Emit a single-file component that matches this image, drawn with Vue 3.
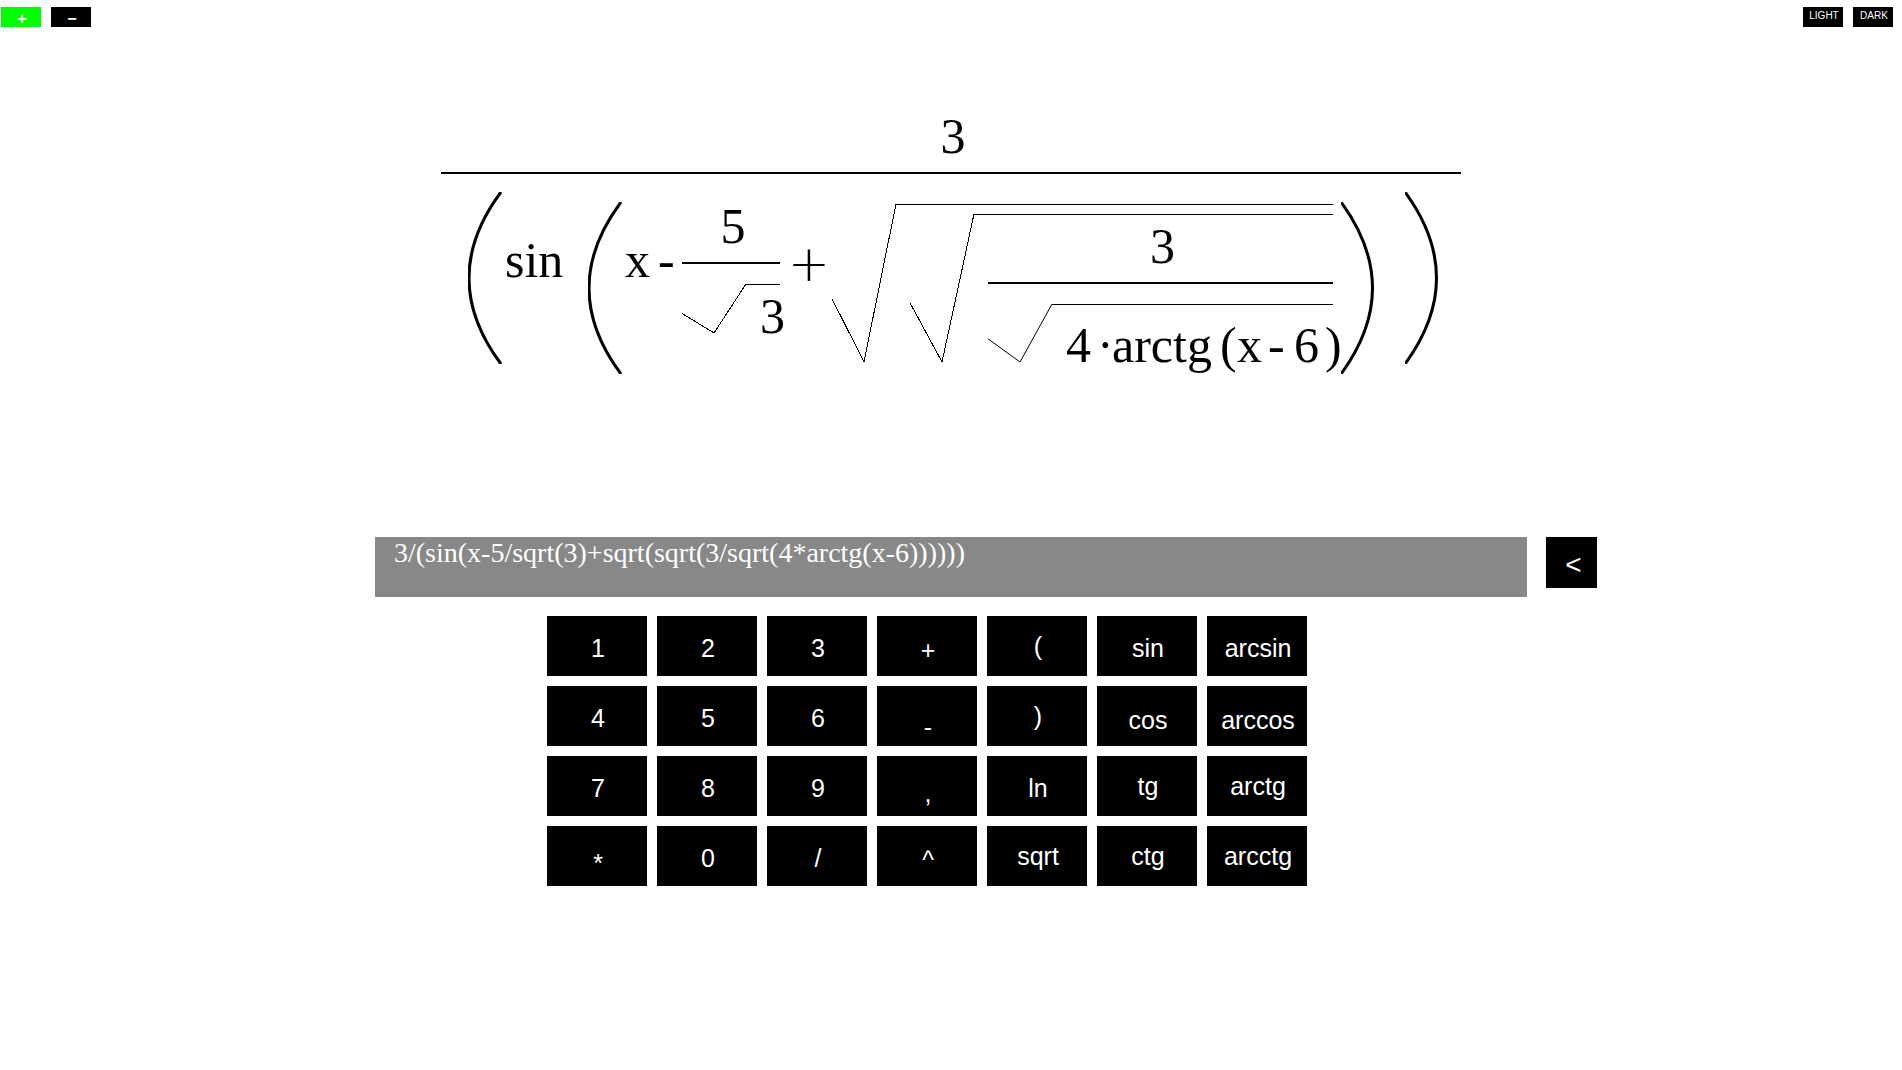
<script setup>
import { ref } from 'vue'

const expression = ref('3/(sin(x-5/sqrt(3)+sqrt(sqrt(3/sqrt(4*arctg(x-6))))))')
const theme = ref('light')
const zoomMode = ref('in')

const keys = [
  { label: '1', seat: 'mid' },
  { label: '2', seat: 'mid' },
  { label: '3', seat: 'mid' },
  { label: '+', seat: 'low' },
  { label: '(', seat: 'top' },
  { label: 'sin', seat: 'mid' },
  { label: 'arcsin', seat: 'mid' },
  { label: '4', seat: 'mid' },
  { label: '5', seat: 'mid' },
  { label: '6', seat: 'mid' },
  { label: '-', seat: 'floor' },
  { label: ')', seat: 'top' },
  { label: 'cos', seat: 'low' },
  { label: 'arccos', seat: 'low' },
  { label: '7', seat: 'mid' },
  { label: '8', seat: 'mid' },
  { label: '9', seat: 'mid' },
  { label: ',', seat: 'deep' },
  { label: 'ln', seat: 'mid' },
  { label: 'tg', seat: 'top' },
  { label: 'arctg', seat: 'top' },
  { label: '*', seat: 'deep' },
  { label: '0', seat: 'mid' },
  { label: '/', seat: 'mid' },
  { label: '^', seat: 'low' },
  { label: 'sqrt', seat: 'top' },
  { label: 'ctg', seat: 'top' },
  { label: 'arcctg', seat: 'top' },
]

function press(label) {
  expression.value += label.length > 1 ? label + '(' : label
}

function erase() {
  expression.value = expression.value.slice(0, -1)
}
</script>

<template>
  <div class="app" :class="theme">
    <header class="toolbar">
      <div class="group">
        <button class="tool sign" :class="{ active: zoomMode === 'in' }" type="button" @click="zoomMode = 'in'">+</button>
        <button class="tool sign" :class="{ active: zoomMode === 'out' }" type="button" @click="zoomMode = 'out'">−</button>
      </div>
      <div class="group">
        <button class="tool" type="button" @click="theme = 'light'">LIGHT</button>
        <button class="tool" type="button" @click="theme = 'dark'">DARK</button>
      </div>
    </header>

    <main>
      <section class="stage">
        <div class="fraction">
          <div class="numerator">3</div>
          <div class="denominator outer">
            <svg class="paren" viewBox="0 0 34 172"><path d="M33 0Q-31 86 33 172" /></svg>
            <span class="token sin">sin</span>

            <div class="argument">
              <svg class="paren" viewBox="0 0 34 172"><path d="M33 0Q-31 86 33 172" /></svg>
              <span class="token var">x</span>
              <span class="token minus">-</span>

              <div class="fraction ratio">
                <div class="numerator">5</div>
                <div class="denominator">
                  <div class="root">
                    <svg class="tick" viewBox="0 0 64 100" preserveAspectRatio="none"><polyline points="0,60 32,100 64,0" /></svg>
                    <div class="radicand near">3</div>
                  </div>
                </div>
              </div>

              <span class="token plus">+</span>

              <div class="root tall">
                <svg class="tick" viewBox="0 0 64 100" preserveAspectRatio="none"><polyline points="0,60 32,100 64,0" /></svg>
                <div class="radicand nested">
                  <div class="root">
                    <svg class="tick" viewBox="0 0 64 100" preserveAspectRatio="none"><polyline points="0,60 32,100 64,0" /></svg>
                    <div class="radicand near">
                      <div class="fraction">
                        <div class="numerator">3</div>
                        <div class="denominator">
                          <div class="root">
                            <svg class="tick" viewBox="0 0 64 100" preserveAspectRatio="none"><polyline points="0,60 32,100 64,0" /></svg>
                            <div class="radicand far">
                              <span class="digit">4</span>
                              <span class="dot">·</span>
                              <span class="func">arctg</span>
                              <span class="open">(</span>
                              <span class="digit">x</span>
                              <span class="dash">-</span>
                              <span class="digit">6</span>
                              <span class="close">)</span>
                            </div>
                          </div>
                        </div>
                      </div>
                    </div>
                  </div>
                </div>
              </div>

              <svg class="paren closing" viewBox="0 0 34 172"><path d="M0 0Q63 86 0 172" /></svg>
            </div>

            <svg class="paren" viewBox="0 0 34 172"><path d="M0 0Q63 86 0 172" /></svg>
          </div>
        </div>
      </section>

      <form class="entry" @submit.prevent>
        <input v-model="expression" class="field" type="text" aria-label="Expression" spellcheck="false" autocomplete="off" />
        <button class="erase" type="button" aria-label="Erase last character" @click="erase">&lt;</button>
      </form>

      <div class="keypad">
        <button v-for="key in keys" :key="key.label" class="key" :class="key.seat" type="button" @click="press(key.label)">{{ key.label }}</button>
      </div>
    </main>
  </div>
</template>

<style>
body {
  margin: 0;
}
</style>

<style scoped>
.app {
  --ink: #000;
  --paper: #fff;
  min-height: 100vh;
  background: var(--paper);
  color: var(--ink);
  font-family: "Liberation Sans", Arial, sans-serif;
}

.app.dark {
  --ink: #fff;
  --paper: #222;
}

button {
  box-sizing: border-box;
  margin: 0;
  padding: 0;
  border: 0;
  background: #000;
  color: #fff;
  font-family: inherit;
  cursor: pointer;
}

.toolbar {
  display: flex;
  justify-content: space-between;
  padding: 7px 9px 0 1px;
}

.group {
  display: flex;
  gap: 10px;
}

.tool {
  width: 40px;
  height: 20px;
  padding: 0 0 3px 2px;
  font-size: 10px;
  line-height: 16px;
}

.tool.sign {
  padding: 4px 0 0 2px;
  font-size: 16px;
  font-weight: bold;
}

.tool.active {
  background: #0f0;
}

/* Formula */
.stage {
  display: flex;
  justify-content: center;
  padding: 92px 0 163px;
  font-family: "Liberation Serif", "Times New Roman", serif;
  font-size: 50px;
  line-height: 34px;
  white-space: nowrap;
}

.numerator {
  padding: 0 0 19px 4px;
  border-bottom: 2px solid var(--ink);
  text-align: center;
}

.denominator {
  padding-top: 20px;
}

.denominator.outer {
  display: flex;
  align-items: flex-start;
  padding: 18px 22px 0 27px;
}

.argument {
  display: flex;
  align-items: flex-start;
  margin-top: 10px;
  margin-right: 30px;
}

.paren {
  display: block;
  flex: none;
  width: 34px;
  height: 172px;
  fill: none;
  stroke: var(--ink);
  stroke-width: 3;
}

.paren.closing {
  margin-left: 8px;
}

.token {
  box-sizing: border-box;
  margin-top: 41px;
}

.sin {
  width: 86px;
  margin-top: 51px;
  padding-left: 3px;
}

.var {
  width: 36px;
  padding-left: 3px;
}

.minus {
  width: 24px;
}

.plus {
  width: 52px;
  margin-top: 45px;
  padding-left: 8px;
  font-family: "DejaVu Sans Light", "DejaVu Sans", sans-serif;
  font-weight: 200;
}

.ratio {
  width: 98px;
  margin-top: 7px;
}

.root {
  display: flex;
}

.root.tall {
  margin-top: 2px;
}

/* The tick takes its height from the radicand beside it */
.tick {
  flex: none;
  contain: size;
  width: 64px;
  height: auto;
  overflow: visible;
  fill: none;
  stroke: var(--ink);
  stroke-width: 1;
  shape-rendering: crispEdges;
}

.tick polyline {
  vector-effect: non-scaling-stroke;
}

.radicand {
  flex: 1;
  min-width: 0;
  padding-left: 14px;
  border-top: 1px solid var(--ink);
}

.radicand.nested {
  padding-top: 9px;
}

.radicand.near {
  padding-top: 14px;
}

.radicand.far {
  display: flex;
  padding-top: 23px;
}

.digit {
  width: 31px;
}

.dot {
  width: 15px;
}

.func {
  width: 108px;
}

.open {
  width: 17px;
}

.dash {
  width: 26px;
}

.close {
  width: 8px;
}

/* Expression entry */
.entry {
  display: grid;
  grid-template-columns: 1fr minmax(0, 1152px) 1fr;
  align-items: start;
  column-gap: 19px;
}

.field {
  box-sizing: border-box;
  grid-column: 2;
  width: 100%;
  height: 60px;
  padding: 0 19px 28px;
  border: 0;
  border-radius: 0;
  outline: 0;
  background: #888;
  color: #fff;
  font-family: "Liberation Serif", "Times New Roman", serif;
  font-size: 28px;
  line-height: 32px;
}

.erase {
  width: 51px;
  height: 51px;
  padding: 4px 0 0 4px;
  font-size: 28px;
}

/* Keypad */
.keypad {
  display: grid;
  grid-template-columns: repeat(7, 100px);
  gap: 10px;
  justify-content: center;
  padding: 19px 48px 19px 0;
}

.key {
  height: 60px;
  padding-left: 2px;
  font-size: 25px;
  line-height: 28px;
}

.key.mid {
  padding-top: 4px;
}

.key.low {
  padding-top: 8px;
}

.key.deep {
  padding-top: 13px;
}

.key.floor {
  padding-top: 21px;
}
</style>
